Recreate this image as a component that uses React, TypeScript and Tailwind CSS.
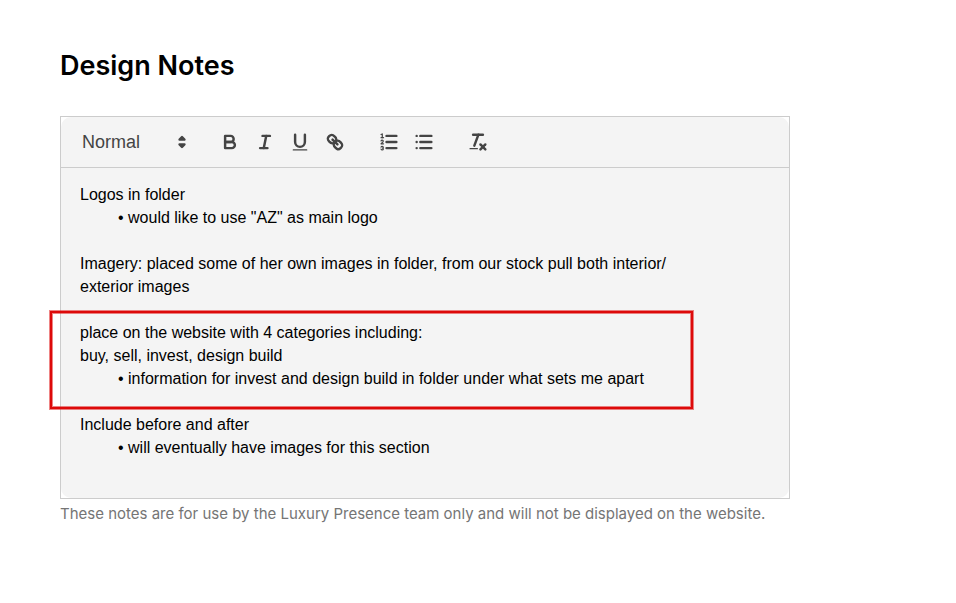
import type { ReactNode } from "react";

function Icon({ children }: { children: ReactNode }) {
  return (
    <svg
      viewBox="0 0 18 18"
      className="size-[22px] shrink-0"
      fill="none"
      stroke="#444444"
      strokeWidth="2"
      strokeLinecap="round"
      strokeLinejoin="round"
      aria-hidden="true"
    >
      {children}
    </svg>
  );
}

function ToolButton({ label, children }: { label: string; children: ReactNode }) {
  return (
    <button type="button" aria-label={label} className="flex h-[30px] w-[35px] items-center justify-center">
      <Icon>{children}</Icon>
    </button>
  );
}

function Toolbar() {
  return (
    <div
      role="toolbar"
      aria-label="Formatting"
      className="flex flex-wrap items-center gap-[19px] rounded-t-[10px] border-b border-[#cccccc] bg-[#f4f4f4] px-2.5 py-2.5"
    >
      <div className="relative flex h-[30px] w-[122px] items-center">
        <select
          aria-label="Text style"
          defaultValue="Normal"
          className="h-[28px] w-full appearance-none bg-transparent pl-[11px] text-[18px] leading-[28px] text-[#444444]"
        >
          <option>Normal</option>
          <option>Heading 1</option>
          <option>Heading 2</option>
        </select>
        <span className="pointer-events-none absolute right-0">
          <Icon>
            <polygon points="7 11 9 13 11 11 7 11" fill="#444444" />
            <polygon points="7 7 9 5 11 7 7 7" fill="#444444" />
          </Icon>
        </span>
      </div>
      <div className="flex">
        <ToolButton label="Bold">
          <path d="M5,4H9.5A2.5,2.5,0,0,1,12,6.5v0A2.5,2.5,0,0,1,9.5,9H5A0,0,0,0,1,5,9V4A0,0,0,0,1,5,4Z" />
          <path d="M5,9h5.5A2.5,2.5,0,0,1,13,11.5v0A2.5,2.5,0,0,1,10.5,14H5a0,0,0,0,1,0,0V9A0,0,0,0,1,5,9Z" />
        </ToolButton>
        <ToolButton label="Italic">
          <line x1="7" x2="13" y1="4" y2="4" />
          <line x1="5" x2="11" y1="14" y2="14" />
          <line x1="8" x2="10" y1="14" y2="4" />
        </ToolButton>
        <ToolButton label="Underline">
          <path d="M5,3V9a4.012,4.012,0,0,0,4,4H9a4.012,4.012,0,0,0,4-4V3" />
          <rect x="3" y="15" width="12" height="1" rx="0.5" fill="#444444" stroke="none" />
        </ToolButton>
        <ToolButton label="Link">
          <line x1="7" x2="11" y1="7" y2="11" />
          <path d="M8.9,4.577a3.476,3.476,0,0,1,.36,4.679A3.476,3.476,0,0,1,4.577,8.9C3.185,7.5,2.035,6.4,4.217,4.217S7.5,3.185,8.9,4.577Z" />
          <path d="M13.423,9.1a3.476,3.476,0,0,0-4.679-.36,3.476,3.476,0,0,0,.36,4.679c1.392,1.392,2.5,2.542,4.679.36S14.815,10.5,13.423,9.1Z" />
        </ToolButton>
      </div>
      <div className="flex">
        <ToolButton label="Numbered list">
          <line x1="7" x2="15" y1="4" y2="4" />
          <line x1="7" x2="15" y1="9" y2="9" />
          <line x1="7" x2="15" y1="14" y2="14" />
          <line x1="2.5" x2="4.5" y1="5.5" y2="5.5" strokeWidth="1" />
          <path
            d="M3.5,6A0.5,0.5,0,0,1,3,5.5V3.085l-0.276.138A0.5,0.5,0,0,1,2.053,3c-0.124-.247-0.023-0.324.224-0.447l1-.5A0.5,0.5,0,0,1,4,2.5v3A0.5,0.5,0,0,1,3.5,6Z"
            fill="#444444"
            stroke="none"
          />
          <path d="M4.5,10.5h-2c0-.234,1.85-1.076,1.85-2.234A0.959,0.959,0,0,0,2.5,8.156" strokeWidth="1" />
          <path
            d="M2.5,14.846a0.959,0.959,0,0,0,1.85-.109A0.7,0.7,0,0,0,3.75,14a0.688,0.688,0,0,0,.6-0.736,0.959,0.959,0,0,0-1.85-.109"
            strokeWidth="1"
          />
        </ToolButton>
        <ToolButton label="Bulleted list">
          <line x1="6" x2="15" y1="4" y2="4" />
          <line x1="6" x2="15" y1="9" y2="9" />
          <line x1="6" x2="15" y1="14" y2="14" />
          <line x1="3" x2="3" y1="4" y2="4" />
          <line x1="3" x2="3" y1="9" y2="9" />
          <line x1="3" x2="3" y1="14" y2="14" />
        </ToolButton>
      </div>
      <ToolButton label="Clear formatting">
        <line x1="5" x2="13" y1="3" y2="3" />
        <line x1="6" x2="9.35" y1="12" y2="3" />
        <line x1="11" x2="15" y1="11" y2="15" />
        <line x1="15" x2="11" y1="11" y2="15" />
        <rect x="2" y="14" width="7" height="1" rx="0.5" fill="#444444" stroke="none" />
      </ToolButton>
    </div>
  );
}

function Bullet({ children }: { children: ReactNode }) {
  return (
    <ul className="pl-[38px]">
      <li>• {children}</li>
    </ul>
  );
}

export default function App() {
  return (
    <main className="min-h-screen bg-white px-[60px] py-12 font-['Liberation_Sans',Arial,sans-serif] text-black">
      <section className="max-w-[730px]">
        <h1 id="notes-title" className="font-['Inter',sans-serif] text-[27px] leading-9 font-semibold">
          Design Notes
        </h1>
        <div className="mt-8 border border-[#cccccc]">
          <Toolbar />
          <div
            role="textbox"
            aria-multiline="true"
            aria-labelledby="notes-title"
            contentEditable
            suppressContentEditableWarning
            className="rounded-b-[10px] bg-[#f4f4f4] px-[19px] pt-[15px] pb-4 text-[16px] leading-[23px] outline-none"
          >
            <p>Logos in folder</p>
            <Bullet>would like to use "AZ" as main logo</Bullet>
            <p><br /></p>
            <p>
              Imagery: placed some of her own images in folder, from our stock pull both interior/
              <br />
              exterior images
            </p>
            <p><br /></p>
            <div className="relative">
              <p>place on the website with 4 categories including:</p>
              <p>buy, sell, invest, design build</p>
              <Bullet>information for invest and design build in folder under what sets me apart</Bullet>
              <div className="pointer-events-none absolute -top-2.5 -bottom-[19px] -left-[30px] w-[643px] border-2 border-[#dd0a0a] ring-1 ring-[#dd0a0a]/50 inset-ring-1 inset-ring-[#dd0a0a]/50" />
            </div>
            <p><br /></p>
            <p>Include before and after</p>
            <Bullet>will eventually have images for this section</Bullet>
            <p><br /></p>
          </div>
        </div>
        <p className="mt-1 font-['Inter',sans-serif] text-[15px] leading-[22px] text-[#757575]">
          These notes are for use by the Luxury Presence team only and will not be displayed on the website.
        </p>
      </section>
    </main>
  );
}
